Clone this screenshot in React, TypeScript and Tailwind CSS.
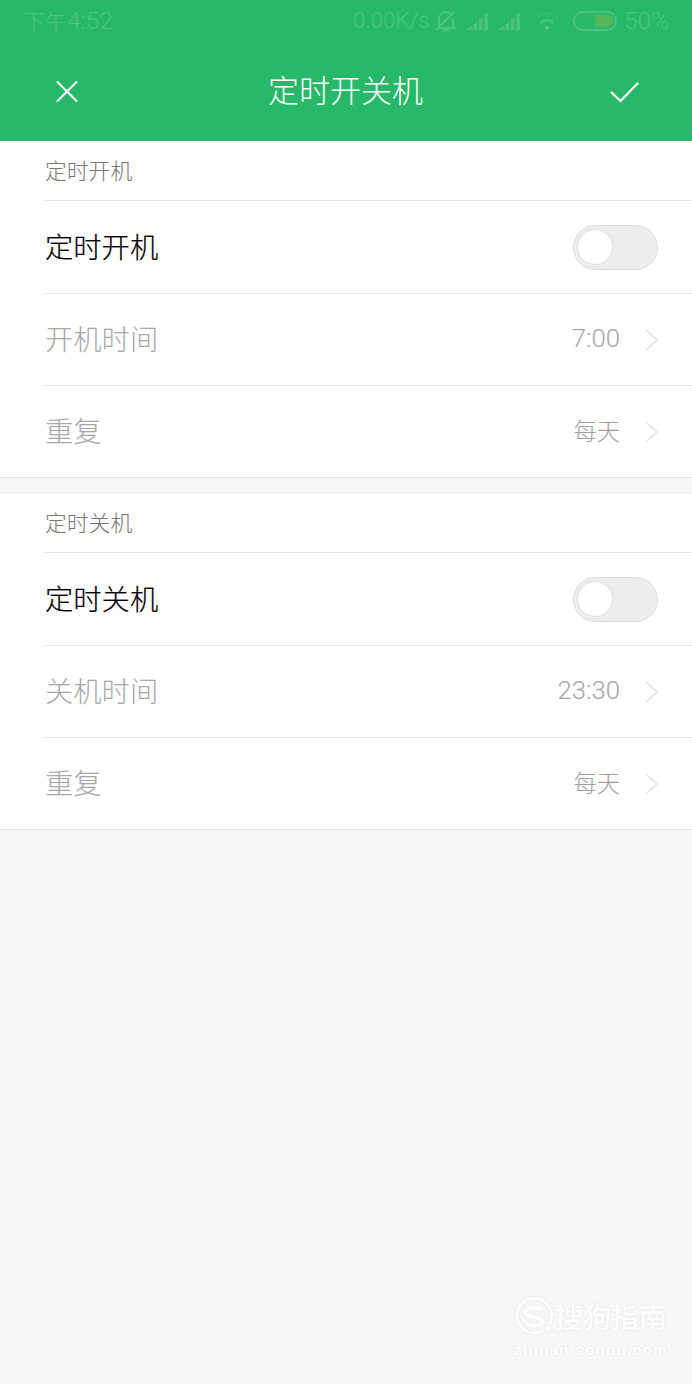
import React, { useState } from "react";

const cjk = "font-['Noto_Sans_CJK_SC',sans-serif]";
const latin = "font-['Roboto','Noto_Sans_CJK_SC',sans-serif]";

function Signal() {
  return (
    <svg width="24" height="22" viewBox="0 0 24 22" fill="#4cc27f">
      <path d="M0 20.200 6 15.500v4.700zM7.300 14.700l3.700-2.400v7.900H7.300zM12.800 9.800l3.700-2.500v12.900h-3.700zM18.200 4.700 22 1.800v18.400h-3.800z" />
    </svg>
  );
}

function StatusBar() {
  return (
    <div className={`flex h-[42px] shrink-0 items-center justify-between pl-[23px] pr-[23px] text-[#4ec381] ${latin}`}>
      <span className="flex items-center whitespace-nowrap leading-[42px]">
        <span className={`-mt-[3px] text-[22px] font-light ${cjk}`}>下午</span>
        <span className="text-[24.5px] font-light">4:52</span>
      </span>
      <div className="flex items-center">
        <span className="w-[76px] whitespace-nowrap text-[22.3px] font-light">0.00K/s</span>
        <svg className="ml-[6px]" width="22" height="22" viewBox="0 0 22 22" fill="none" stroke="#4cc27f" strokeWidth="2">
          <path d="M4 16V9.500C4 5 7 2 11 2c3 0 5.200 1.500 6.300 4M18 9v7l2 2H3M1 20 19 2M8 20.300h6" />
        </svg>
        <span className="ml-[9px]"><Signal /></span>
        <span className="ml-[8px]"><Signal /></span>
        <svg className="ml-[12px]" width="26" height="20" viewBox="0 0 26 20" fill="none" strokeWidth="2">
          <path d="M2 7Q13-2 24 7" stroke="#35ba70" />
          <path d="M6.500 12Q13 6 19.500 12" stroke="#4cc27f" strokeWidth="2.500" />
          <path d="M10.500 16.500Q13 14 15.500 16.500L13 19z" fill="#60ca8d" />
        </svg>
        <span className="ml-[13px] flex h-[20px] w-[44px] items-center justify-end rounded-full border-2 border-[#4cc27f] pr-[2px]">
          <span className="h-[12px] w-[18px] rounded-r-[5px] bg-[#56b65a]" />
        </span>
        <span className="ml-[7px] w-[45px] whitespace-nowrap text-[24.5px] font-light">50%</span>
      </div>
    </div>
  );
}

function Toggle() {
  const [on, setOn] = useState(false);
  return (
    <button
      role="switch"
      aria-checked={on}
      onClick={() => setOn(!on)}
      className={`flex h-[45px] w-[85px] items-center rounded-full border border-[#dcdcdc] px-[3px] ${on ? "justify-end bg-[#28b869]" : "bg-[#ededed]"}`}
    >
      <span className="h-[36px] w-[36px] rounded-full border border-[#dedede] bg-white" />
    </button>
  );
}

function Row({ label, value, last }: { label: string; value?: string; last?: boolean }) {
  const numeric = value?.includes(":");
  return (
    <div className={`${last ? "" : "ml-[45px] border-b border-[#e6e6e6]"}`}>
      <div className={`flex items-center justify-between pr-[34px] ${last ? "h-[91px] pb-[2px] pl-[45px]" : value ? "h-[91px] pb-[2px]" : "h-[92px]"}`}>
        <span className={`-mt-[2px] text-[28.3px] font-light leading-[40px] ${value ? "text-[#a8a8a8]" : "text-black [-webkit-text-stroke:0.2px_black]"}`}>{label}</span>
        {value ? (
          <span className="flex items-center">
            <span className={numeric ? `-mt-[1px] text-[25.7px] font-light leading-[40px] text-[#a6a6a6] ${latin}` : "-mt-[2px] text-[23.300px] font-light leading-[40px] text-[#a0a0a0]"}>{value}</span>
            <svg className="ml-[25px] mt-[2px]" width="13" height="22" viewBox="0 0 13 22" fill="none" stroke="#e2e2e2" strokeWidth="1.6">
              <path d="M1 1 12 11 1 21" />
            </svg>
          </span>
        ) : (
          <Toggle />
        )}
      </div>
    </div>
  );
}

function Section({ title, timeLabel, time }: { title: string; timeLabel: string; time: string }) {
  return (
    <section className="border-b border-[#e4e4e4] bg-white">
      <h2 className="ml-[45px] flex h-[60px] items-center border-b border-[#e6e6e6] pb-[1px] text-[21.8px] font-light text-[#777]">{title}</h2>
      <Row label={title} />
      <Row label={timeLabel} value={time} />
      <Row label="重复" value="每天" last />
    </section>
  );
}

function Watermark() {
  return (
    <div className="absolute bottom-[23px] right-[22px] flex w-[156px] flex-col text-white [filter:drop-shadow(0_0_1px_#e2e2e2)]">
      <div className="flex h-[40px] items-center gap-[1px]">
        <svg width="40" height="40" viewBox="0 0 40 40" fill="none" stroke="white">
          <path d="M30 33A17.300 17.300 0 1 1 35.500 27" strokeWidth="2.700" />
          <path d="M28.500 12.500C23 9.800 10.500 10.300 11.500 16c.8 4.600 17 3 16.500 8.500-.4 5.300-12 5-17 2" strokeWidth="4" />
          <circle cx="34" cy="31.500" r="2" fill="white" stroke="none" />
        </svg>
        <span className="-mt-[2px] whitespace-nowrap text-[28px] font-medium leading-[40px]">搜狗指南</span>
      </div>
      <span className="mt-[2px] whitespace-nowrap font-['Liberation_Sans',sans-serif] text-[15px] font-bold leading-[22px] tracking-[1.4px]">zhinan.sogou.com</span>
    </div>
  );
}

export default function App() {
  return (
    <main className={`relative flex h-[1384px] w-[692px] flex-col overflow-hidden bg-[#f7f7f7] ${cjk}`}>
      <header className="flex h-[141px] flex-col bg-[#28b869]">
        <StatusBar />
        <div className="flex h-[99px] items-center justify-between pl-[56px] pr-[53px] text-white">
          <button aria-label="取消" className="w-[25px]">
            <svg width="22" height="22" viewBox="0 0 22 22" fill="none" stroke="white" strokeWidth="2" strokeLinecap="round">
              <path d="m1.500 1 19 19m0-19-19 19" />
            </svg>
          </button>
          <h1 className="-mt-[5px] text-[31px] font-light leading-[44px]">定时开关机</h1>
          <button aria-label="确定">
            <svg width="29" height="22" viewBox="0 0 29 22" fill="none" stroke="white" strokeWidth="2.200" strokeLinecap="round">
              <path d="m1.500 11.500 9 8.500L27.500 2.500" />
            </svg>
          </button>
        </div>
      </header>
      <Section title="定时开机" timeLabel="开机时间" time="7:00" />
      <div className="h-[15px] shrink-0 border-b border-[#e6e6e6]" />
      <Section title="定时关机" timeLabel="关机时间" time="23:30" />
      <Watermark />
    </main>
  );
}
